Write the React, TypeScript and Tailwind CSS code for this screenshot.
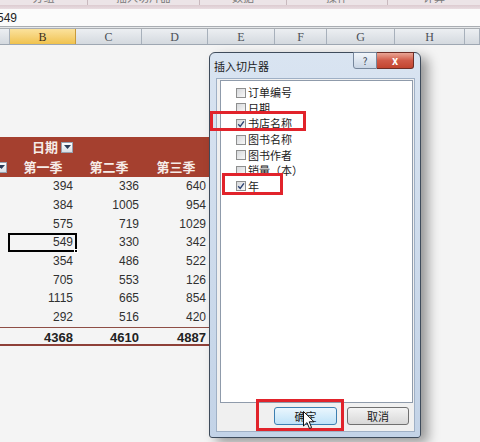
import React from "react";

const colB = [394, 384, 575, 549, 354, 705, 1115, 292];
const colC = [336, 1005, 719, 330, 486, 553, 665, 516];
const colD = [640, 954, 1029, 342, 522, 126, 854, 420];

const fields = [
  { name: "订单编号", checked: false },
  { name: "日期", checked: false },
  { name: "书店名称", checked: true },
  { name: "图书名称", checked: false },
  { name: "图书作者", checked: false },
  { name: "销量（本）", checked: false },
  { name: "年", checked: true },
];

const columns = [
  { label: "A", w: "w-[10px]", active: false },
  { label: "B", w: "w-[66px]", active: true },
  { label: "C", w: "w-[66px]", active: false },
  { label: "D", w: "w-[66px]", active: false },
  { label: "E", w: "w-[67px]", active: false },
  { label: "F", w: "w-[52px]", active: false },
  { label: "G", w: "w-[68px]", active: false },
  { label: "H", w: "w-[70px]", active: false },
  { label: "I", w: "w-[15px]", active: false },
];

function DropButton({ className = "" }: { className?: string }) {
  return (
    <span
      className={
        "inline-flex shrink-0 items-center justify-center w-[12px] h-[11px] border border-[#96a1b0] bg-linear-to-b from-[#fdfdfe] to-[#d9dfe6] " +
        className
      }
    >
      <svg width="7" height="4" viewBox="0 0 7 4">
        <path d="M0 0h7L3.5 4z" fill="#2c3c58" />
      </svg>
    </span>
  );
}

function CheckBox({ checked }: { checked: boolean }) {
  return (
    <span className="flex items-center justify-center w-[10px] h-[10px] border border-[#8e8f8f] bg-linear-to-br from-[#d6d8db] to-[#f8f8f8]">
      {checked && (
        <svg width="8" height="8" viewBox="0 0 8 8">
          <path d="M1.2 4.2L3.2 6.4L6.9 1.3" fill="none" stroke="#2d4373" strokeWidth="1.4" />
        </svg>
      )}
    </span>
  );
}

function Cell({ v, bold = false, selected = false }: { v: number; bold?: boolean; selected?: boolean }) {
  return (
    <div className={"relative flex items-center justify-end pr-[3px] " + (bold ? "font-bold text-[13px] text-[#222]" : "text-[12px] text-[#303030]")}>
      {v}
      {selected && (
        <span className="absolute -left-[2px] -right-[1px] top-0 bottom-0 border-2 border-black">
          <span className="absolute -right-[3px] -bottom-[3px] w-[4px] h-[4px] bg-black border border-white" />
        </span>
      )}
    </div>
  );
}

export default function App() {
  return (
    <div className="relative w-[480px] h-[442px] overflow-hidden bg-[#f4f4f4] font-['Liberation_Sans','Noto_Sans_CJK_SC',sans-serif]">
      {/* ribbon group labels, cut at the top edge */}
      <div className="flex h-[5px] overflow-hidden bg-[#ece4e7] text-[11px] leading-[11px] text-[#7a7a7a]">
        <div className="w-[88px] border-r border-[#c9b9be] flex justify-center"><span className="-mt-[7px]">分组</span></div>
        <div className="w-[112px] border-r border-[#c9b9be] flex justify-center"><span className="-mt-[7px]">插入切片器</span></div>
        <div className="w-[87px] border-r border-[#c9b9be] flex justify-center"><span className="-mt-[7px]">数据</span></div>
        <div className="w-[101px] border-r border-[#c9b9be] flex justify-center"><span className="-mt-[7px]">操作</span></div>
        <div className="flex-1 flex justify-center"><span className="-mt-[7px]">计算</span></div>
      </div>
      <div className="h-[4px] bg-linear-to-b from-[#dccbd0] to-[#e9dde1]" />

      {/* formula bar */}
      <div className="h-[17px] bg-[#fbfbfb] flex items-center text-[12px] text-[#222]">
        <span className="-ml-[3px]">549</span>
      </div>
      <div className="h-[3px] border-t border-b border-[#a9adb2] bg-[#e6e8ea]" />

      {/* column headers */}
      <div className="flex h-[16px] border-b border-[#9ea7b2] font-['Liberation_Serif',serif] text-[12px] text-[#4a4f57]">
        {columns.map((c) => (
          <div
            key={c.label}
            className={
              "shrink-0 flex items-center justify-center border-r " +
              c.w +
              (c.active
                ? " bg-linear-to-b from-[#fbe29c] to-[#f0c24c] border-[#c99b3a] text-[#3a3020]"
                : " bg-linear-to-b from-[#eceff2] to-[#d4d9df] border-[#a7b0bb]")
            }
          >
            {c.label === "A" || c.label === "I" ? "" : c.label}
          </div>
        ))}
      </div>

      {/* pivot table */}
      <div className="pt-[92px]">
        <div className="w-[224px] bg-[#a5402f] text-[13px] font-bold text-[#f6ece8] font-['Noto_Sans_CJK_SC',sans-serif]">
          <div className="grid grid-cols-[10px_66px_66px_82px] h-[20px] items-center">
            <div />
            <div className="flex items-center pl-[22px] gap-[3px]">
              <span>日期</span>
              <DropButton />
            </div>
          </div>
          <div className="grid grid-cols-[10px_66px_66px_82px] h-[20px] items-center">
            <div className="flex items-center overflow-hidden">
              <DropButton className="-ml-[5px]" />
            </div>
            <div className="text-center">第一季</div>
            <div className="text-center">第二季</div>
            <div className="text-center pr-[14px]">第三季</div>
          </div>
        </div>

        {colB.map((b, i) => (
          <div key={i} className="grid grid-cols-[10px_66px_66px_67px] h-[18.7px]">
            <div />
            <Cell v={b} selected={i === 3} />
            <Cell v={colC[i]} />
            <Cell v={colD[i]} />
          </div>
        ))}
        <div className="grid grid-cols-[10px_66px_66px_67px] w-[224px] h-[19px] border-t border-[#8e4e45] border-b-2 border-b-[#8e4038]">
          <div />
          <Cell v={4368} bold />
          <Cell v={4610} bold />
          <Cell v={4887} bold />
        </div>
      </div>

      {/* Insert Slicers dialog */}
      <div className="absolute left-[209px] top-[52px] w-[212px] h-[386px] flex flex-col border border-[#3e4b5b] rounded-t-[6px] rounded-b-[3px] bg-linear-to-b from-[#d9e4f1] to-[#c3d3e7] shadow-[7px_5px_12px_rgba(0,0,0,0.38)] pl-[6px] pr-[5px] pb-[5px] font-['Noto_Sans_CJK_SC',sans-serif]">
        <div className="relative h-[25px] flex items-center -ml-[2px] text-[11px] text-[#1b1b1b]">
          <span className="mt-[1px]">插入切片器</span>
          <div className="absolute -top-[1px] right-[1px] flex">
            <div className="w-[24px] h-[17px] flex items-center justify-center border border-[#76869b] rounded-bl-[3px] bg-linear-to-b from-[#f1f5fa] to-[#c9d5e4] text-[10px] text-[#3c4654]">
              ?
            </div>
            <div className="w-[37px] h-[17px] flex items-center justify-center border border-l-0 border-[#6e2d25] rounded-br-[3px] bg-linear-to-b from-[#e9a595] via-[#d05a48] to-[#c2442f] text-[11px] font-bold text-white">
              x
            </div>
          </div>
        </div>

        <div className="flex-1 flex flex-col border border-[#9fb0c5] bg-[#f0f0f0] pl-[3px] pr-[1px]">
          <div className="h-[323px] mt-[1px] border border-[#8f9bab] bg-white pt-[4px] pl-[15px] text-[11px] text-[#1a1a1a]">
            {fields.map((f) => (
              <div key={f.name} className="h-[15.6px] flex items-center gap-[2px]">
                <CheckBox checked={f.checked} />
                <span className="leading-none">{f.name}</span>
              </div>
            ))}
          </div>
          <div className="flex justify-end gap-[10px] pr-[4px] mt-[4px] text-[11px] text-[#1a1a1a]">
            <button className="w-[63px] h-[18px] flex items-center justify-center rounded-[3px] border border-[#3c7fb1] bg-linear-to-b from-[#eaf6fd] to-[#bfe3f8]">
              确定
            </button>
            <button className="w-[62px] h-[18px] flex items-center justify-center rounded-[3px] border border-[#707070] bg-linear-to-b from-[#f4f4f4] to-[#d8d8d8]">
              取消
            </button>
          </div>
        </div>
      </div>

      {/* red annotation boxes */}
      <div className="absolute left-[210px] top-[111px] w-[96px] h-[20px] border-[3px] border-[#e1232b]" />
      <div className="absolute left-[222px] top-[173px] w-[61px] h-[22px] border-[3px] border-[#e1232b]" />
      <div className="absolute left-[256px] top-[399px] w-[88px] h-[32px] border-[3px] border-[#e1232b]" />

      {/* mouse pointer */}
      <svg className="absolute left-[303px] top-[411px]" width="12" height="19" viewBox="0 0 12 19">
        <path d="M0.5 0.5V15L4 11.6L6.5 17.5L8.6 16.6L6.2 10.8H11Z" fill="#fff" stroke="#111" strokeWidth="1" strokeLinejoin="round" />
      </svg>
    </div>
  );
}
